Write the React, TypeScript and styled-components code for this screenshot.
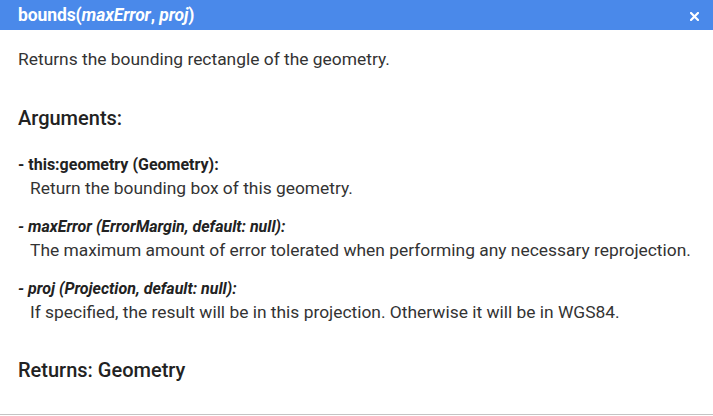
import styled, { createGlobalStyle } from 'styled-components'

const GlobalStyle = createGlobalStyle`
  html, body {
    margin: 0;
    padding: 0;
    background: #ffffff;
  }
  body {
    font-family: Roboto, "Liberation Sans", Arial, sans-serif;
    color: #333333;
  }
`

interface Arg {
  name: string
  type: string
  optional: boolean
  description: string
}

const args: Arg[] = [
  {
    name: 'this:geometry',
    type: 'Geometry',
    optional: false,
    description: 'Return the bounding box of this geometry.',
  },
  {
    name: 'maxError',
    type: 'ErrorMargin, default: null',
    optional: true,
    description: 'The maximum amount of error tolerated when performing any necessary reprojection.',
  },
  {
    name: 'proj',
    type: 'Projection, default: null',
    optional: true,
    description: 'If specified, the result will be in this projection. Otherwise it will be in WGS84.',
  },
]

const App = () => {
  return (
    <>
      <GlobalStyle />
      <Panel>
        <Header>
          <Signature>
            bounds(<em>maxError</em>, <em>proj</em>)
          </Signature>
          <CloseButton aria-label='close'>
            <svg width='9' height='9' viewBox='0 0 9 9'>
              <path d='M1 1 L8 8 M8 1 L1 8' stroke='#ffffff' strokeWidth='2.2' strokeLinecap='square' />
            </svg>
          </CloseButton>
        </Header>
        <Body>
          <Description>Returns the bounding rectangle of the geometry.</Description>
          <SectionTitle>Arguments:</SectionTitle>
          <ArgList>
            {args.map((arg) => (
              <ArgItem key={arg.name}>
                <ArgName $optional={arg.optional}>
                  - {arg.name} ({arg.type}):
                </ArgName>
                <ArgDesc>{arg.description}</ArgDesc>
              </ArgItem>
            ))}
          </ArgList>
          <Returns>Returns: Geometry</Returns>
        </Body>
      </Panel>
    </>
  )
}

export default App

const Panel = styled.div`
  width: 713px;
  height: 415px;
  box-sizing: border-box;
  border-bottom: 1px solid #c4c4c4;
  display: flex;
  flex-direction: column;
  background: #ffffff;
`

const Header = styled.div`
  height: 30px;
  background-color: #4a89ea;
  display: flex;
  align-items: center;
  justify-content: space-between;
  padding: 0 14px 0 18px;
  color: #ffffff;
`

const Signature = styled.div`
  font-size: 17.5px;
  font-weight: 700;
  letter-spacing: -0.1px;

  em {
    font-style: italic;
  }
`

const CloseButton = styled.div`
  display: flex;
  align-items: center;
  padding-top: 3px;
`

const Body = styled.div`
  padding: 18px 8px 0 18px;
  display: flex;
  flex-direction: column;
`

const Description = styled.div`
  font-size: 17.4px;
  line-height: 22px;
`

const SectionTitle = styled.div`
  font-size: 20px;
  font-weight: 500;
  line-height: 24px;
  margin-top: 36px;
  color: #222222;
`

const ArgList = styled.div`
  display: flex;
  flex-direction: column;
  gap: 18px;
  margin-top: 25px;
`

const ArgItem = styled.div`
  display: flex;
  flex-direction: column;
  gap: 2px;
`

const ArgName = styled.div<{ $optional: boolean }>`
  font-size: 16px;
  font-weight: 700;
  line-height: 20px;
  font-style: ${(p) => (p.$optional ? 'italic' : 'normal')};
  color: #222222;
`

const ArgDesc = styled.div`
  font-size: 17.4px;
  line-height: 22px;
  padding-left: 12px;
  white-space: nowrap;
`

const Returns = styled.div`
  font-size: 20px;
  font-weight: 500;
  line-height: 24px;
  margin-top: 35px;
  color: #222222;
`
